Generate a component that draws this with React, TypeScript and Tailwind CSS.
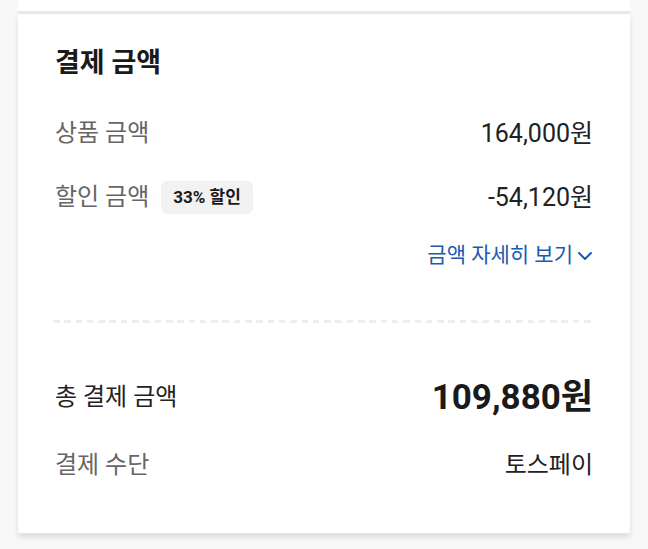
import React from "react";

export default function App() {
  const font = { fontFamily: "Roboto, 'Noto Sans CJK KR', 'Noto Sans', sans-serif" };
  return (
    <div className="w-[648px] h-[549px] bg-[#f8f8f8] overflow-hidden" style={font}>
      <div className="mx-[18px] w-[612px]">
        <div className="h-[11px] bg-white border-b-[3px] border-[#e8e8e8] box-content" />
        <div className="bg-white px-[37px] pt-[34px] pb-[48px] border-b border-[#e6e6e6] shadow-[0_3px_5px_rgba(0,0,0,0.12)]">
          <div className="h-[30px] flex items-center text-[27px] font-bold text-[#1a1a1a] leading-none">결제 금액</div>
          <div className="mt-[35px] h-[40px] flex items-center justify-between text-[24px] leading-none">
            <span className="text-[#666666]">상품 금액</span>
            <span className="text-[#222222] text-[25px]">164,000원</span>
          </div>
          <div className="mt-[24px] h-[40px] flex items-center justify-between text-[24px] leading-none">
            <div className="flex items-center">
              <span className="text-[#666666]">할인 금액</span>
              <span className="ml-[12px] h-[33px] px-[12px] flex items-center rounded-[6px] bg-[#f2f2f2] text-[17px] font-bold text-[#1a1a1a]">33% 할인</span>
            </div>
            <span className="text-[#222222] text-[25px]">-54,120원</span>
          </div>
          <div className="mt-[26px] h-[24px] flex items-center justify-end text-[21px] text-[#1b5ab0] leading-none">
            <span>금액 자세히 보기</span>
            <svg width="16" height="16" viewBox="0 0 16 16" className="ml-[4px] mt-[2px]">
              <path d="M2 5 L8 11 L14 5" fill="none" stroke="#1b5ab0" strokeWidth="2" strokeLinecap="round" strokeLinejoin="round" />
            </svg>
          </div>
          <div className="mt-[53px] -mx-[2px] h-[3px] bg-[repeating-linear-gradient(to_right,#eeeeee_0_6.5px,transparent_6.5px_11.3px)]" />
          <div className="mt-[52px] h-[44px] flex items-center justify-between leading-none">
            <span className="text-[24px] text-[#222222]">총 결제 금액</span>
            <span className="text-[35px] font-bold text-[#1a1a1a]">109,880원</span>
          </div>
          <div className="mt-[26px] h-[40px] flex items-center justify-between text-[24px] leading-none">
            <span className="text-[#666666]">결제 수단</span>
            <span className="text-[#222222]">토스페이</span>
          </div>
        </div>
      </div>
    </div>
  );
}
